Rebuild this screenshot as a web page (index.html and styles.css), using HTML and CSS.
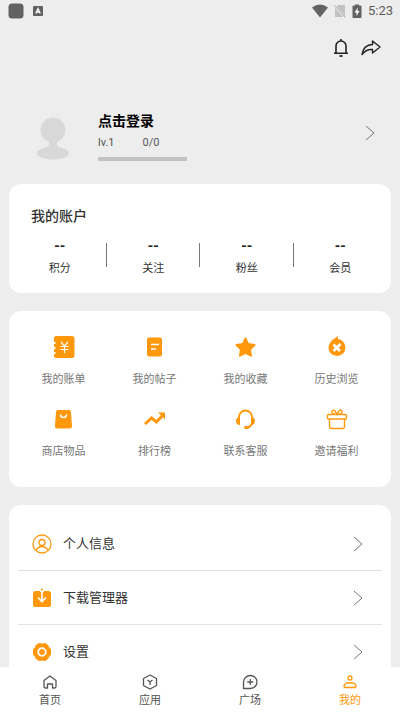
FILE: index.html
```html
<!DOCTYPE html>
<html lang="zh-CN">
<head>
<meta charset="utf-8">
<meta name="viewport" content="width=device-width, initial-scale=1">
<title>我的</title>
<link rel="stylesheet" href="styles.css">
</head>
<body>
<div class="app">
  <header class="status">
    <svg width="16" height="16" viewBox="0 0 16 16"><rect x=".5" y=".5" width="15" height="15" rx="3.5" fill="#626262"/></svg>
    <svg width="10" height="10" viewBox="0 0 10 10"><rect width="10" height="10" rx="1" fill="#626262"/><path d="M2.8 7.5 5 2.5l2.200 5M3.600 6h2.800" fill="none" stroke="#fff" stroke-width="1.300"/></svg>
    <span class="status-right">
      <svg width="16" height="14" viewBox="0 0 16 14"><path d="M0 3.500Q8-2.500 16 3.500L8 13.500Z" fill="#626262"/></svg>
      <svg width="12" height="14" viewBox="0 0 12 14"><path d="M4 1h7v11L2.500 2.500ZM1 4l8.500 9H1Z" fill="#c2c2c2"/><path d="m.5 1.500 11 12" stroke="#aaa"/></svg>
      <svg width="10" height="14" viewBox="0 0 10 14"><path d="M3 1.500V.500h4v1h1.500q1 0 1 1V13q0 1-1 1h-7q-1 0-1-1V2.500q0-1 1-1Z" fill="#626262"/><path d="M5.800 3.500 2.500 8.500h2v3.500l3-5h-2Z" fill="#fff"/></svg>
      <span class="time">5:23</span>
    </span>
  </header>
  <main class="content">
    <div class="actions">
      <button class="icon-button" aria-label="通知"><svg width="16" height="20" viewBox="0 0 16 20" fill="none" stroke="#222" stroke-width="1.600"><path d="M3 15V8a5 5 0 0 1 10 0v7M1 15.300h14M8 1v2"/><path d="M6.500 18h3" stroke-width="1.800"/></svg></button>
      <button class="icon-button" aria-label="分享"><svg width="20" height="18" viewBox="0 0 20 18" fill="none" stroke="#222" stroke-width="1.400" stroke-linejoin="round"><path d="M11.500 2 19 8l-7.500 6v-3.500Q5 10 1 15.500 2.500 6 11.500 5.500Z"/></svg></button>
    </div>
    <a class="profile" href="#login">
      <svg width="32" height="44" viewBox="0 0 32 44" fill="#d8d8d8"><circle cx="16" cy="14" r="12.500"/><path d="M12 24h8v5q1 2 5 3 7 2 7 5c0 4-7 6.500-16 6.500S0 41 0 37q0-3 7-5 4-1 5-3Z"/></svg>
      <span class="profile-text">
        <strong class="login">点击登录</strong>
        <span class="level"><span>lv.1</span><span>0/0</span></span>
        <span class="progress"></span>
      </span>
      <svg class="chevron" width="10" height="16" viewBox="0 0 10 16"><path d="m1 1 8 7-8 7"/></svg>
    </a>

    <section class="card account">
      <h2>我的账户</h2>
      <div class="stats">
        <a href="#points"><b>--</b><span>积分</span></a>
        <a href="#following"><b>--</b><span>关注</span></a>
        <a href="#fans"><b>--</b><span>粉丝</span></a>
        <a href="#member"><b>--</b><span>会员</span></a>
      </div>
    </section>

    <section class="card tools">
      <a href="#bills"><svg viewBox="0 0 24 24"><path d="M4 1h16q2.500 0 2.500 2.500v17Q22.500 23 20 23H4q-2 0-2-2v-2h1.500v-2H2v-3h1.500v-2H2V9h1.500V7H2V3q0-2 2-2Z"/><path class="cut thin-cut" d="m9 7 3.500 4L16 7M12.500 11v7M8.500 11.500h8M8.500 14.500h8"/></svg><span>我的账单</span></a>
      <a href="#posts"><svg viewBox="0 0 24 24"><rect x="4" y="2.500" width="15" height="19" rx="2"/><path class="cut" d="M8 9.500h8M8 14h5"/></svg><span>我的帖子</span></a>
      <a href="#favorites"><svg viewBox="0 0 24 24"><path stroke="#ff980d" stroke-width="2" stroke-linejoin="round" d="m11.500 3.500 2.700 5.600 6.300.9-4.500 4.400 1 6.300-5.500-2.900L6 20.700l1-6.300L2.500 10l6.300-.9Z"/></svg><span>我的收藏</span></a>
      <a href="#history"><svg viewBox="0 0 24 24"><circle cx="12" cy="12.500" r="8.500"/><path d="M6 6 13 1v9Z"/><path fill="#fff" d="M2 3h6L3 10.500H2Z"/><path class="cut cross" d="m8.500 9.500 6.500 6.500M15.500 9l-7 7"/></svg><span>历史浏览</span></a>
      <a href="#shop"><svg viewBox="0 0 24 24"><path d="M6 3h11q2 0 2 2l1 14q0 2.500-2.500 2.500h-12Q3 21.500 3 19L4 5q0-2 2-2Z"/><path class="cut" d="M8.500 7.500q0 3 3 3t3-3"/></svg><span>商店物品</span></a>
      <a href="#ranking"><svg viewBox="0 0 24 24"><path class="line" d="m2 17 6.500-6 5 4L20 8"/><path d="M15 5.500h7v7Z"/></svg><span>排行榜</span></a>
      <a href="#support"><svg viewBox="0 0 24 24"><path class="line thin" d="M5 15v-5a6.500 6.500 0 0 1 13 0v5M18 16q-1 4-5 4.500"/><path d="M6 10v8q-4 0-4-4t4-4Zm11 0v8q4 0 4-4t-4-4Z"/><rect x="10" y="19" width="5" height="3" rx="1.500"/></svg><span>联系客服</span></a>
      <a href="#invite"><svg viewBox="0 0 24 24"><path class="line hair" d="M4.500 12.500v7q0 2 2 2h11q2 0 2-2v-7M3.500 7.500h17q1 0 1 1V11q0 1-1 1h-17q-1 0-1-1V8.500q0-1 1-1Zm8.500 0Q6 7 7 4q2-3 5 3.500Q15 1 17 4q1 3-5 3.500Z"/></svg><span>邀请福利</span></a>
    </section>

    <nav class="card menu">
      <a href="#profile"><svg class="menu-icon" viewBox="0 0 20 20" fill="none" stroke="#ff980d" stroke-width="1.300"><circle cx="10" cy="10" r="9"/><circle cx="10" cy="8.500" r="3"/><path d="M4 16.500Q6 12.500 10 12.500t6 4"/></svg><span>个人信息</span><svg class="chevron" width="10" height="16" viewBox="0 0 10 16"><path d="m1 1 8 7-8 7"/></svg></a>
      <a href="#downloads"><svg class="menu-icon" viewBox="0 0 20 20"><path d="M3.500 3h13Q19 3 19 5.500v11q0 2.500-2.500 2.500h-13Q1 19 1 16.500v-11Q1 3 3.500 3Z" fill="#ff980d"/><path d="M8 2.500h4V4H8Z" fill="#fff"/><path d="M10 3v10M6 9.500l4 4 4-4" fill="none" stroke="#fff" stroke-width="1.600"/><circle cx="10" cy="1.500" r="1" fill="#ff980d"/></svg><span>下载管理器</span><svg class="chevron" width="10" height="16" viewBox="0 0 10 16"><path d="m1 1 8 7-8 7"/></svg></a>
      <a href="#settings"><svg class="menu-icon" viewBox="0 0 20 20"><path fill="#ff980d" stroke="#ff980d" stroke-linejoin="round" d="M7 1.500q3 1 6 0l3 2q0 2.500 2.500 3.500v6q-2.500 1-2.500 3.500l-3 2q-3-1-6 0l-3-2Q4 14 1.500 13V7Q4 6 4 3.500Z"/><circle cx="10" cy="10" r="3.800" fill="none" stroke="#fff" stroke-width="1.800"/></svg><span>设置</span><svg class="chevron" width="10" height="16" viewBox="0 0 10 16"><path d="m1 1 8 7-8 7"/></svg></a>
    </nav>
  </main>

  <nav class="tabs">
    <a href="#home"><svg viewBox="0 0 16 16"><path d="M5.500 14H3.500q-1.500 0-1.500-1.500V6.500L8 2l6 4.500v6q0 1.500-1.500 1.500h-2v-4h-5Z"/></svg><span>首页</span></a>
    <a href="#apps"><svg viewBox="0 0 16 16"><path d="m8 1 6.500 3.500v7L8 15l-6.500-3.500v-7ZM5.500 6 8 8l2.500-2M8 8v3"/></svg><span>应用</span></a>
    <a href="#square"><svg viewBox="0 0 16 16"><path d="M1.500 14.500V8A6.750 6.500 0 1 1 8.500 14.500ZM8.300 5v6M5.300 8h6"/></svg><span>广场</span></a>
    <a class="active" href="#me" aria-current="page"><svg viewBox="0 0 16 16"><circle cx="8" cy="4" r="2"/><path d="M4.500 9h7q2.500 1 2.500 3.500 0 1-1 1H3q-1 0-1-1Q2 10 4.500 9Z"/></svg><span>我的</span></a>
  </nav>
</div>
</body>
</html>
```
FILE: styles.css
```css
* { box-sizing: border-box; }

body {
  margin: 0;
  background: #ededed;
  color: #333;
  font-family: Roboto, "Noto Sans CJK SC", sans-serif;
  font-size: 11px;
  line-height: 16px;
}

a { color: inherit; text-decoration: none; }
svg { display: block; flex: none; }

.app {
  display: flex;
  flex-direction: column;
  height: 100vh;
  overflow: hidden;
}

.status {
  display: flex;
  flex: none;
  align-items: center;
  gap: 9px;
  height: 22px;
  padding: 0 7px 0 8px;
}

.status-right {
  display: flex;
  align-items: center;
  gap: 6px;
  margin-left: auto;
}

.time { color: #5c5c5c; font-size: 13px; }

.content {
  flex: 1;
  min-height: 0;
  overflow: hidden;
  padding: 0 9px;
}

.actions {
  display: flex;
  justify-content: flex-end;
  align-items: center;
  gap: 12px;
  height: 52px;
  padding-right: 10px;
}

.icon-button {
  padding: 0;
  border: 0;
  background: none;
}

.profile {
  display: flex;
  align-items: center;
  gap: 29px;
  height: 110px;
  padding: 18px 16px 0 28px;
}

.profile .chevron { margin-left: auto; margin-bottom: 10px; }

.profile-text {
  display: flex;
  flex-direction: column;
  gap: 4px;
  width: 89px;
  padding-bottom: 4px;
}

.login {
  color: #000;
  font-size: 14px;
  line-height: 20px;
  white-space: nowrap;
}

.level {
  display: flex;
  gap: 28px;
  color: #555;
}

.progress {
  height: 4px;
  margin-top: 2px;
  background: #c2c2c2;
}

.chevron {
  fill: none;
  stroke: #777;
  stroke-width: 1;
}

.card {
  margin-bottom: 18px;
  border-radius: 12px;
  background: #fff;
}

.account { padding: 22px 4px 16px; }

h2 {
  margin: 0 0 12px;
  padding-left: 18px;
  font-size: 14px;
  font-weight: 500;
  line-height: 20px;
}

.stats {
  display: grid;
  grid-template-columns: repeat(4, 1fr);
}

.stats a {
  position: relative;
  display: flex;
  flex-direction: column;
  align-items: center;
  gap: 7px;
}

.stats a + a::before {
  content: "";
  position: absolute;
  top: 5px;
  left: -1px;
  height: 24px;
  border-left: 1px solid #777;
}

.stats b { color: #222; font-size: 14px; font-weight: 700; }

.tools {
  display: grid;
  grid-template-columns: repeat(4, 1fr);
  row-gap: 19px;
  padding: 24px 9px 27px;
}

.tools a {
  display: flex;
  flex-direction: column;
  align-items: center;
  gap: 13px;
  color: #777;
}

.tools svg { width: 24px; height: 24px; fill: #ff980d; }
.tools .cut { fill: none; stroke: #fff; stroke-width: 1.6; }
.tools .thin-cut { stroke-width: 1.2; }
.tools .cross { stroke-width: 2.6; }
.tools .line { fill: none; stroke: #ff980d; stroke-width: 3; }
.tools .thin { stroke-width: 2; }
.tools .hair { stroke-width: 1.4; }

.menu { padding: 12px 9px; }

.menu a {
  display: flex;
  align-items: center;
  gap: 11px;
  height: 54px;
  padding: 0 19px 0 14px;
  border-bottom: 1px solid #e2e2e2;
  font-size: 13px;
}

.menu a:last-child { border-bottom: 0; }
.menu-icon { width: 20px; height: 20px; }
.menu .chevron { margin-left: auto; }

.tabs {
  display: grid;
  grid-template-columns: repeat(4, 1fr);
  flex: none;
  height: 45px;
  padding-top: 7px;
  background: #fff;
  color: #555;
}

.tabs a {
  display: flex;
  flex-direction: column;
  align-items: center;
  gap: 3px;
}

.tabs svg {
  width: 16px;
  height: 16px;
  fill: none;
  stroke: currentColor;
  stroke-width: 1.3;
  stroke-linejoin: round;
}

.tabs .active { color: #ff980d; }
```
